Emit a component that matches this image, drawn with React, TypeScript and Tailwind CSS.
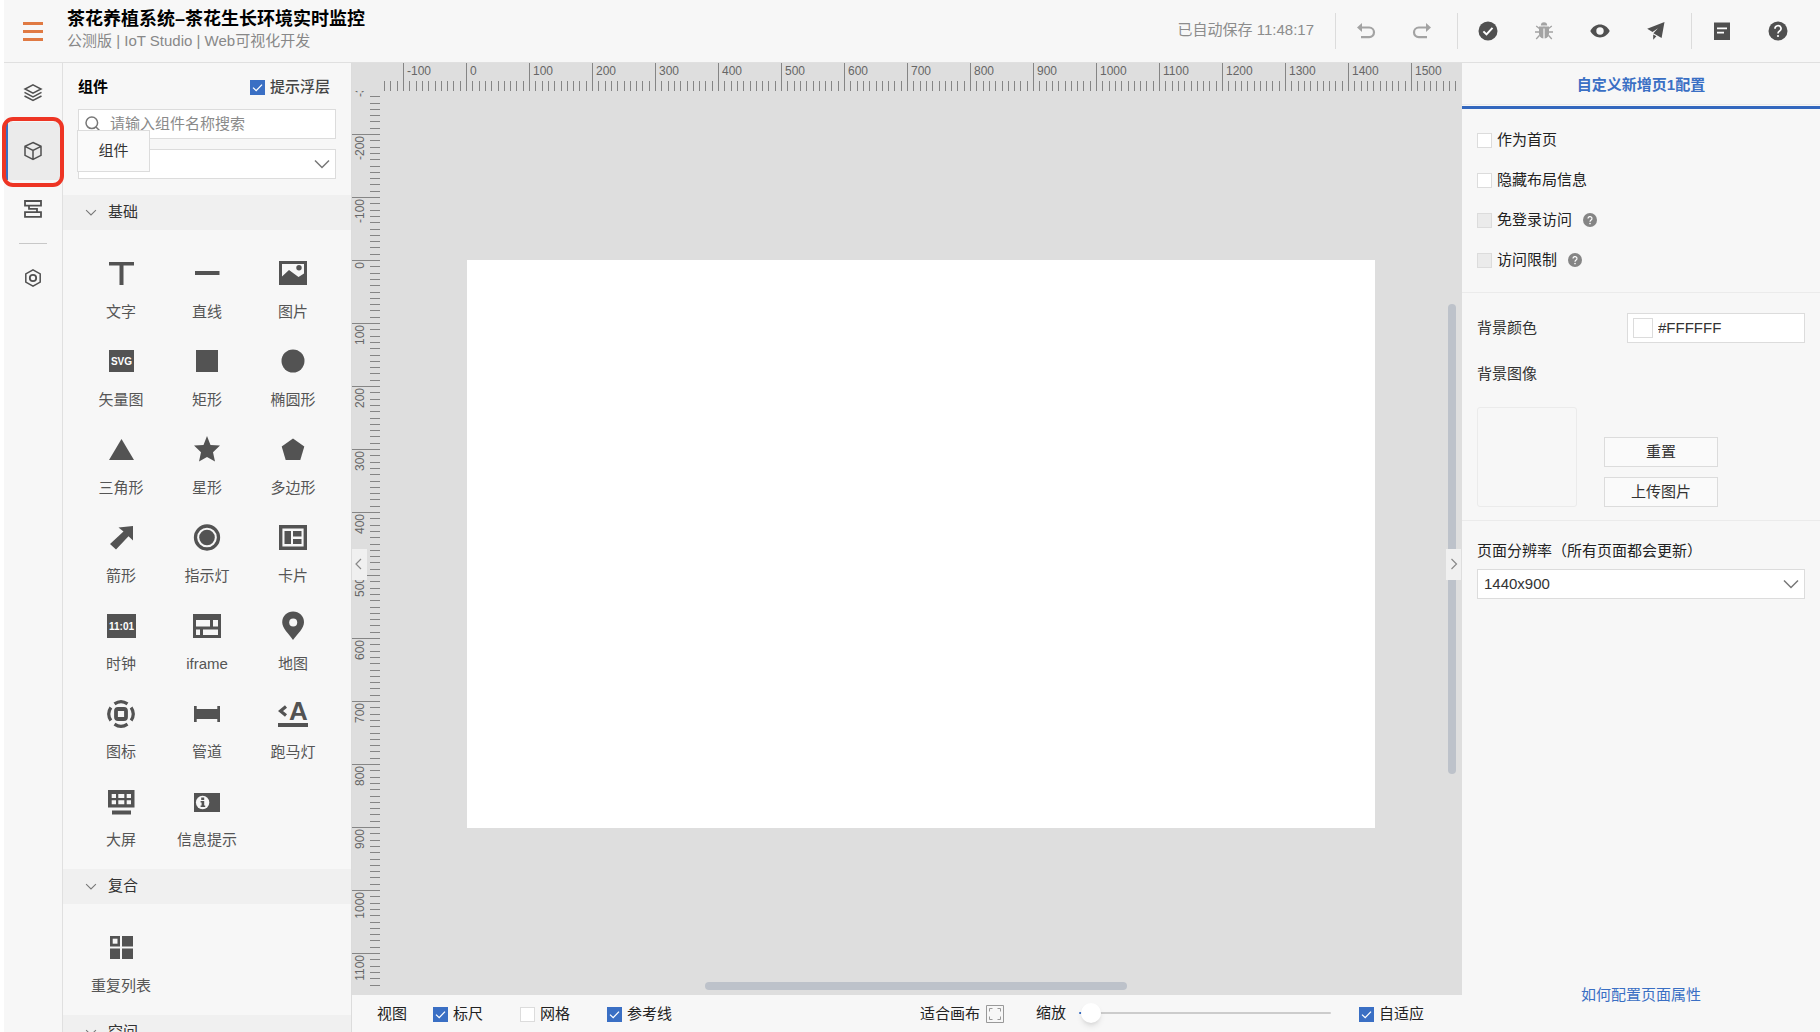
import React, { useState } from 'react';

const BG = '#f7f7f7';

/* ---------- shared controls ---------- */

function Checkbox({
  id,
  label,
  defaultChecked = false,
  disabled = false,
  className = '',
}: {
  id: string;
  label: string;
  defaultChecked?: boolean;
  disabled?: boolean;
  className?: string;
}) {
  return (
    <label htmlFor={id} className={`flex items-center gap-[5px] text-[15px] leading-5 ${className}`}>
      <span className="grid size-[15px] shrink-0">
        <input
          id={id}
          type="checkbox"
          defaultChecked={defaultChecked}
          disabled={disabled}
          className="peer col-start-1 row-start-1 size-[15px] appearance-none border border-[#dcdcdc] bg-white checked:border-[#3a6fc4] checked:bg-[#3a6fc4] disabled:bg-[#ebebeb]"
        />
        <svg viewBox="0 0 15 15" className="pointer-events-none invisible col-start-1 row-start-1 size-[15px] peer-checked:visible">
          <path d="M3 7.6l3.2 3L12 4.6" fill="none" stroke="#fff" strokeWidth="1.3" />
        </svg>
      </span>
      {label}
    </label>
  );
}

function Chevron({ className = '' }: { className?: string }) {
  return (
    <svg viewBox="0 0 16 10" className={className} fill="none" stroke="#777" strokeWidth="1.5">
      <path d="M1 1.5l7 7 7-7" />
    </svg>
  );
}

function SelectBox({ label, options, className = '' }: { label: string; options: string[]; className?: string }) {
  return (
    <span className={`grid items-center ${className}`}>
      <select
        aria-label={label}
        className="col-start-1 row-start-1 h-[30px] w-full appearance-none border border-[#dcdcdc] bg-white px-[6px] text-[15px] text-[#333]"
      >
        {options.map((o) => (
          <option key={o}>{o}</option>
        ))}
      </select>
      <Chevron className="pointer-events-none col-start-1 row-start-1 mr-[6px] h-[10px] w-4 justify-self-end" />
    </span>
  );
}

/* ---------- header ---------- */

function HeaderIcon({ label, children, muted = false }: { label: string; children: React.ReactNode; muted?: boolean }) {
  return (
    <button
      type="button"
      aria-label={label}
      className={`flex h-9 w-14 items-center justify-center ${muted ? 'text-[#a3a3a3]' : 'text-[#505050]'}`}
    >
      <svg viewBox="0 0 20 20" className="size-5" fill="currentColor">
        {children}
      </svg>
    </button>
  );
}

const Divider = () => <span className="mr-[2px] ml-[7px] h-9 w-px bg-[#dcdcdc]" />;

function Header() {
  return (
    <header className="flex h-[63px] shrink-0 items-center border-b border-[#e0e0e0] pr-[14px]">
      <button type="button" aria-label="菜单" className="ml-[19px] grid w-5 gap-[5px]">
        <span className="h-[3px] bg-[#e07a43]" />
        <span className="h-[3px] bg-[#e07a43]" />
        <span className="h-[3px] bg-[#e07a43]" />
      </button>
      <div className="ml-6 pb-[2px]">
        <h1 className="text-[18px] leading-[22px] font-bold text-black">茶花养植系统–茶花生长环境实时监控</h1>
        <p className="text-[15px] leading-[22px] text-[#888]">公测版 | IoT Studio | Web可视化开发</p>
      </div>
      <p className="mr-[14px] ml-auto pb-[2px] text-[15px] text-[#8c8c8c]">已自动保存 11:48:17</p>
      <Divider />
      <HeaderIcon label="撤销" muted>
        <path d="M1 6.5l5-4.5v9z" />
        <path d="M5 6.5h8.2a4.6 4.6 0 0 1 0 9.6H5" fill="none" stroke="currentColor" strokeWidth="2.2" />
      </HeaderIcon>
      <HeaderIcon label="重做" muted>
        <path d="M19 6.5l-5-4.5v9z" />
        <path d="M15 6.5H6.8a4.6 4.6 0 0 0 0 9.6H15" fill="none" stroke="currentColor" strokeWidth="2.2" />
      </HeaderIcon>
      <Divider />
      <HeaderIcon label="校验">
        <circle cx="10" cy="10" r="9.5" />
        <path d="M5.4 10.4l3.1 3 6-6.6" fill="none" stroke="#fff" strokeWidth="2" />
      </HeaderIcon>
      <HeaderIcon label="调试" muted>
        <path d="M6.8 4.6a3.2 3.4 0 0 1 6.4 0z" />
        <path d="M5 5.6h4.4v12C6.4 17.2 5 15 5 12.5z" />
        <path d="M15 5.6h-4.4v12c3-.4 4.4-2.6 4.4-5.1z" />
        <path d="M9 5.6h2v1.8H9z" />
        <path d="M5.4 7.6L2.2 5M14.6 7.6L17.8 5M5 11H1M15 11h4M5.6 14.2L2.2 18M14.4 14.2l3.4 3.8" stroke="currentColor" strokeWidth="1.3" />
      </HeaderIcon>
      <HeaderIcon label="预览">
        <path d="M.3 10C2.5 6 6 3.6 10 3.6S17.500 6 19.700 10c-2.200 4-5.700 6.400-9.700 6.400S2.500 14 .3 10z" />
        <circle cx="10" cy="10" r="3.700" fill={BG} />
      </HeaderIcon>
      <HeaderIcon label="发布">
        <path d="M18.500 1L1.200 7.800l5.300 3.200L12 7.200l-4.600 5L15.600 17z" />
        <path d="M7.200 13.400l3.200 1.800-3.200 3.600z" />
      </HeaderIcon>
      <Divider />
      <HeaderIcon label="文档">
        <path d="M2 1.500h16v17.500H2z" />
        <path d="M5 7.300h10M5 11.700h7" stroke="#fff" strokeWidth="1.700" />
      </HeaderIcon>
      <HeaderIcon label="帮助">
        <circle cx="10" cy="10" r="9.500" />
        <path d="M7 7.700a3 2.900 0 1 1 4.600 2.300C10.500 10.700 10 11.100 10 12.600" fill="none" stroke="#fff" strokeWidth="1.700" />
        <circle cx="10" cy="15" r="1.100" fill="#fff" />
      </HeaderIcon>
    </header>
  );
}

/* ---------- left rail ---------- */

function RailItem({ label, active = false, children }: { label: string; active?: boolean; children: React.ReactNode }) {
  return (
    <button
      type="button"
      aria-label={label}
      className={`relative flex h-[58px] w-full items-center justify-center text-[#505050] ${
        active ? 'border-l-4 border-[#3a6fc4] bg-[#ebebeb] pr-1' : ''
      }`}
    >
      <svg viewBox="0 0 20 20" className="size-5" fill="none" stroke="currentColor" strokeWidth="1.500">
        {children}
      </svg>
      {active && <span className="absolute -top-[5px] -right-[2px] -bottom-[7px] -left-[6px] rounded-[11px] border-4 border-[#ee3524]" />}
    </button>
  );
}

function Rail() {
  return (
    <nav className="z-10 w-[59px] shrink-0 border-r border-[#e0e0e0] pt-px">
      <RailItem label="页面">
        <path d="M10 1.800l8 4.200-8 4.200L2 6z" />
        <path d="M1.500 9.400L10 13.800l8.500-4.400M1.500 13L10 17.500l8.500-4.500" />
      </RailItem>
      <RailItem label="组件" active>
        <path d="M10 1.500l8 3.800v9L10 18.500l-8-4.200v-9zM2 5.300l8 4.200 8-4.200M10 9.500v9" />
      </RailItem>
      <RailItem label="数据">
        <path d="M2 2h16v4.600H2zM2 13.200h16v4.600H2zM6 6.600v3.300h8v3.300" strokeWidth="1.800" />
      </RailItem>
      <div className="mx-auto mt-[5px] mb-[5px] h-px w-7 bg-[#c8c8c8]" />
      <RailItem label="设置">
        <path d="M10 1.800l7.200 4.100v8.200L10 18.200l-7.200-4.100V5.900z" />
        <circle cx="10" cy="10" r="3.200" strokeWidth="1.800" />
      </RailItem>
    </nav>
  );
}

/* ---------- component palette ---------- */

const basic: [string, React.ReactNode][] = [
  ['文字', <path d="M3 4h25v3.500H17.500V27h-4V7.500H3z" />],
  ['直线', <path d="M3 13h24.500v4H3z" />],
  [
    '图片',
    <>
      <path d="M1 3h28v24H1z" />
      <path d="M4 6h22v9.500L20.500 19 11 12l-7 6.500z" fill={BG} />
      <circle cx="21" cy="9.700" r="2.700" />
    </>,
  ],
  [
    '矢量图',
    <>
      <path d="M3 4h25v22H3z" />
      <text x="15.500" y="18.500" textAnchor="middle" fontSize="10" fontWeight="700" fill="#fff">SVG</text>
    </>,
  ],
  ['矩形', <path d="M4 4h22v22H4z" />],
  ['椭圆形', <circle cx="15" cy="15" r="11.500" />],
  ['三角形', <path d="M15.500 5L28 26H3z" />],
  ['星形', <path d="M15 2l3.500 9L28 11.400l-7 6.800L23 27.500l-8-4.500-8 4.500 2-9.300-7-6.800 9.500-.4z" />],
  ['多边形', <path d="M15 4.500l11.300 8L22.300 26H7.700L3.700 12.500z" />],
  ['箭形', <path d="M27 4v14.500l-4.500-4.300L10 27.500 4 22l13.500-12.500L12.500 5.500z" />],
  [
    '指示灯',
    <>
      <circle cx="15" cy="15.500" r="11.500" fill="none" stroke="currentColor" strokeWidth="3.300" />
      <circle cx="15" cy="15.500" r="7.800" />
    </>,
  ],
  [
    '卡片',
    <>
      <path d="M2.700 4.700h24.600v21.600H2.700z" fill="none" stroke="currentColor" strokeWidth="3.400" />
      <path d="M6.500 9H13v13H6.500zM15 9h8.500v5.500H15zM15 17h8.500v5H15z" />
    </>,
  ],
  [
    '时钟',
    <>
      <path d="M1 4h29v24H1z" />
      <text x="15.500" y="19.700" textAnchor="middle" fontSize="10" fontWeight="700" fill="#fff">11:01</text>
    </>,
  ],
  [
    'iframe',
    <>
      <path d="M1 4h28v24H1z" />
      <path d="M4 10h14v6.500H4zM21 10h5v6.500h-5zM4 19.500h4V25H4zM11 19.500h15V25H11z" fill={BG} />
    </>,
  ],
  [
    '地图',
    <>
      <path d="M15 30C11 24 4.200 18.500 4.200 12.300a10.900 10.900 0 0 1 21.800 0C26 18.500 19.500 24 15 30z" />
      <circle cx="15.200" cy="12.600" r="4" fill={BG} />
    </>,
  ],
  [
    '图标',
    <>
      <g fill="none" stroke="currentColor">
        <path d="M8.500 5.900a11.600 11.600 0 0 1 13 0M25.100 9.500a11.600 11.600 0 0 1 0 13M21.500 26.100a11.600 11.600 0 0 1-13 0M4.900 22.500a11.600 11.600 0 0 1 0-13" strokeWidth="3.200" />
        <rect x="10" y="11" width="10" height="10" rx="2" strokeWidth="3.800" />
      </g>
    </>,
  ],
  ['管道', <path d="M2 8h2.700v3h20.600V8H28v16h-2.700v-3H4.700v3H2z" />],
  [
    '跑马灯',
    <>
      <path d="M8 8.500l-5.500 4.500 5.500 4.500" fill="none" stroke="currentColor" strokeWidth="3.200" />
      <text x="20.500" y="22" textAnchor="middle" fontSize="26" fontWeight="700">A</text>
      <path d="M0 25h30v4H0z" />
    </>,
  ],
  [
    '大屏',
    <>
      <path d="M2 4h26.500v17.500H2zM6 24.500h19v4H6z" />
      <path d="M5.700 8H10v4H5.700zM12.300 8h6v4h-6zM20.700 8H25v4h-4.300zM5.700 14.300H10v4H5.700zM12.300 14.300h6v4h-6zM20.700 14.300H25v4h-4.300z" fill={BG} />
    </>,
  ],
  [
    '信息提示',
    <>
      <path d="M2 7h26v19H2z" />
      <circle cx="10.600" cy="16.500" r="6.700" fill={BG} />
      <path d="M9.200 11.600h3v2.400h-3zM8.600 15h3.600v4.600h1v1.400H8.600v-1.400h1v-3.200h-1z" />
    </>,
  ],
];

const compound: [string, React.ReactNode][] = [
  [
    '重复列表',
    <>
      <path d="M4 4h10v10.500H4zM16 4h11v10.500H16zM4 16.500h10V27H4zM16 16.500h11V27H16z" />
      <path d="M6.700 6.700h4.800v5H6.700z" fill={BG} />
    </>,
  ],
];

function Section({ title, items }: { title: string; items: [string, React.ReactNode][] }) {
  const [open, setOpen] = useState(true);
  return (
    <section>
      <h3>
        <button
          type="button"
          aria-expanded={open}
          onClick={() => setOpen(!open)}
          className="flex h-[35px] w-full items-center gap-[11px] bg-[#f0f0f0] pl-[22px] text-[15px] text-[#333]"
        >
          <Chevron className="h-[7px] w-3" />
          {title}
        </button>
      </h3>
      {open && (
        <div className="grid grid-cols-3 px-[15px] pt-[23px]">
          {items.map(([name, icon]) => (
            <button key={name} type="button" className="flex h-[88px] flex-col items-center gap-[14px] pt-[5px] text-[15px] leading-5 whitespace-nowrap text-[#555]">
              <svg viewBox="0 0 30 30" className="size-[30px] shrink-0 text-[#535353]" fill="currentColor">
                {icon}
              </svg>
              {name}
            </button>
          ))}
        </div>
      )}
    </section>
  );
}

function Palette() {
  return (
    <aside className="w-[289px] shrink-0 overflow-hidden border-r border-[#dcdcdc]">
      <div className="flex items-center justify-between pt-[14px] pr-[21px] pl-[15px]">
        <h2 className="text-[15px] leading-5 font-bold text-black">组件</h2>
        <Checkbox id="tips" label="提示浮层" defaultChecked className="font-medium text-[#444]" />
      </div>
      <div className="relative mt-3 mb-4 grid gap-[10px] px-[15px]">
        <label className="flex h-[30px] items-center gap-[9px] border border-[#dcdcdc] bg-white pl-[6px]">
          <svg viewBox="0 0 16 16" className="size-4 shrink-0" fill="none" stroke="#777" strokeWidth="1.500">
            <circle cx="6.800" cy="6.800" r="5.800" />
            <path d="M11 11l4.500 4.500" />
          </svg>
          <input aria-label="搜索组件" placeholder="请输入组件名称搜索" className="w-full min-w-0 bg-transparent text-[15px] outline-none placeholder:text-[#8a8a8a]" />
        </label>
        <SelectBox label="组件分类" options={['']} />
        <div role="tooltip" className="absolute top-[21px] left-[14px] flex h-[42px] w-[73px] items-center justify-center border border-[#dcdcdc] bg-[#fafafa] text-[15px] text-[#333]">
          组件
        </div>
      </div>
      <Section title="基础" items={basic} />
      <Section title="复合" items={compound} />
      <Section title="空间" items={[]} />
    </aside>
  );
}

/* ---------- canvas ---------- */

const SCALE = 0.63;
const units = (from: number, to: number) => Array.from({ length: (to - from) / 10 + 1 }, (_, i) => from + i * 10);

function HorizontalRuler() {
  return (
    <svg className="block h-[28px] w-full overflow-hidden" fontSize="12" fill="#666" shapeRendering="crispEdges">
      {units(-130, 1570).map((u) => {
        const x = Math.round(u * SCALE + 86);
        const major = u % 100 === 0;
        return (
          <g key={u}>
            <rect x={x} y={major ? 0 : 18} width="1" height={major ? 28 : 10} fill="#858585" />
            {major && <text x={x + 4} y="12">{u}</text>}
          </g>
        );
      })}
    </svg>
  );
}

function VerticalRuler() {
  return (
    <svg className="block h-full w-[28px] shrink-0 overflow-hidden" fontSize="12" fill="#666" shapeRendering="crispEdges">
      {units(-300, 1150).map((u) => {
        const y = Math.round(u * SCALE + 169);
        const major = u % 100 === 0;
        return (
          <g key={u}>
            <rect x={major ? 0 : 18} y={y} width={major ? 28 : 10} height="1" fill="#858585" />
            {major && <text transform={`translate(12 ${y + 2}) rotate(-90)`} textAnchor="end">{u}</text>}
          </g>
        );
      })}
    </svg>
  );
}

function Collapse({ label, d, className }: { label: string; d: string; className: string }) {
  return (
    <button type="button" aria-label={label} className={`absolute top-[486px] flex h-[31px] w-[15px] items-center justify-center bg-[#f0f0f0] pb-px ${className}`}>
      <svg viewBox="0 0 8 12" className="h-3 w-2" fill="none" stroke="#888" strokeWidth="1.200">
        <path d={d} />
      </svg>
    </button>
  );
}

function Workspace() {
  return (
    <main className="flex min-w-0 flex-1 flex-col">
      <div className="relative flex min-h-0 flex-1 flex-col overflow-hidden bg-[#dedede]">
        <div className="shrink-0 pl-[28px]">
          <HorizontalRuler />
        </div>
        <div className="flex min-h-0 flex-1 overflow-hidden">
          <VerticalRuler />
          <div className="min-w-0 flex-1 overflow-hidden pt-[169px] pl-[87px]">
            <div className="h-[568px] w-[908px] bg-white" />
          </div>
        </div>
        <Collapse label="收起组件面板" d="M6 1L1 6l5 5" className="left-0 pr-[2px]" />
        <div className="absolute top-[241px] right-[6px] h-[470px] w-2 rounded-full bg-[#bdc2ca]" />
        <div className="absolute bottom-[5px] left-[353px] h-2 w-[422px] rounded-full bg-[#bdc2ca]" />
        <Collapse label="收起配置面板" d="M1.500 1l5 5-5 5" className="right-px" />
      </div>
      <footer className="flex h-[37px] shrink-0 items-center pt-px pr-[38px] pl-[25px] text-[15px] text-[#222]">
        <span>视图</span>
        <Checkbox id="ruler" label="标尺" defaultChecked className="ml-[26px]" />
        <Checkbox id="grid" label="网格" className="ml-[37px]" />
        <Checkbox id="guides" label="参考线" defaultChecked className="ml-[37px]" />
        <button type="button" className="ml-auto flex items-center gap-[6px]">
          适合画布
          <svg viewBox="0 0 18 18" className="size-[18px]" fill="none" stroke="#999">
            <path d="M.5.500h17v17H.5z" />
            <path d="M3.500 6.500v-3h3M11.500 3.500h3v3M14.500 11.500v3h-3M6.500 14.500h-3v-3" />
          </svg>
        </button>
        <label htmlFor="zoom" className="mr-[13px] ml-[32px] pb-[2px]">缩放</label>
        <input
          id="zoom"
          type="range"
          min="0"
          max="100"
          defaultValue="1"
          className="-mt-[2px] h-[2px] w-[252px] appearance-none rounded-full bg-[linear-gradient(to_right,#3a6fc4_12px,#cccccc_12px)] [&::-webkit-slider-thumb]:size-5 [&::-webkit-slider-thumb]:appearance-none [&::-webkit-slider-thumb]:rounded-full [&::-webkit-slider-thumb]:bg-white [&::-webkit-slider-thumb]:shadow-md"
        />
        <Checkbox id="adaptive" label="自适应" defaultChecked className="ml-7" />
      </footer>
    </main>
  );
}

/* ---------- configuration ---------- */

function Hint() {
  return (
    <svg viewBox="0 0 14 14" className="ml-[11px] size-[14px]">
      <circle cx="7" cy="7" r="7" fill="#858585" />
      <path d="M5 5.500a2 1.900 0 1 1 3 1.600C7.300 7.500 7 7.900 7 8.800" fill="none" stroke="#fff" strokeWidth="1.200" />
      <circle cx="7" cy="10.600" r=".8" fill="#fff" />
    </svg>
  );
}

function Config() {
  return (
    <aside className="flex w-[358px] shrink-0 flex-col text-[15px] leading-5 text-[#333]">
      <h2 className="flex h-[42px] items-center justify-center border-b border-[#ebebeb] pt-[2px] font-bold text-[#3a6fc4]">自定义新增页1配置</h2>
      <div className="mt-px h-[3px] bg-[#3468be]" />
      <div className="grid gap-5 border-b border-[#ebebeb] px-[15px] pt-[21px] pb-[22px] text-[#222]">
        <Checkbox id="home" label="作为首页" />
        <Checkbox id="hide" label="隐藏布局信息" />
        <div className="flex items-center">
          <Checkbox id="free" label="免登录访问" disabled />
          <Hint />
        </div>
        <div className="flex items-center">
          <Checkbox id="limit" label="访问限制" disabled />
          <Hint />
        </div>
      </div>
      <div className="border-b border-[#ebebeb] px-[15px] pt-5 pb-[13px]">
        <div className="flex items-center justify-between">
          <label htmlFor="bg">背景颜色</label>
          <div className="flex h-[30px] w-[178px] items-center gap-[5px] border border-[#dcdcdc] bg-white pl-[5px]">
            <span className="size-5 shrink-0 border border-[#dcdcdc] bg-white" />
            <input id="bg" defaultValue="#FFFFFF" className="w-full min-w-0 bg-transparent outline-none" />
          </div>
        </div>
        <p className="mt-[21px]">背景图像</p>
        <div className="mt-[23px] flex items-end gap-[27px]">
          <div className="size-[100px] rounded-[3px] border border-[#ebebeb]" />
          <div className="grid w-[114px] gap-[10px]">
            <button type="button" className="h-[30px] border border-[#dcdcdc] bg-[#fafafa]">重置</button>
            <button type="button" className="h-[30px] border border-[#dcdcdc] bg-[#fafafa]">上传图片</button>
          </div>
        </div>
      </div>
      <div className="px-[15px] pt-5">
        <p className="text-[#222]">页面分辨率（所有页面都会更新）</p>
        <SelectBox label="页面分辨率" options={['1440x900']} className="mt-2" />
      </div>
      <a href="#help" className="mt-auto mb-[27px] self-center text-[#3a6fc4]">如何配置页面属性</a>
    </aside>
  );
}

export default function App() {
  return (
    <div className="h-screen overflow-hidden bg-white pl-1 font-['Liberation_Sans','Noto_Sans_CJK_SC',sans-serif]">
      <div className="flex h-full flex-col bg-[#f7f7f7]">
        <Header />
        <div className="flex min-h-0 flex-1">
          <Rail />
          <Palette />
          <Workspace />
          <Config />
        </div>
      </div>
    </div>
  );
}
